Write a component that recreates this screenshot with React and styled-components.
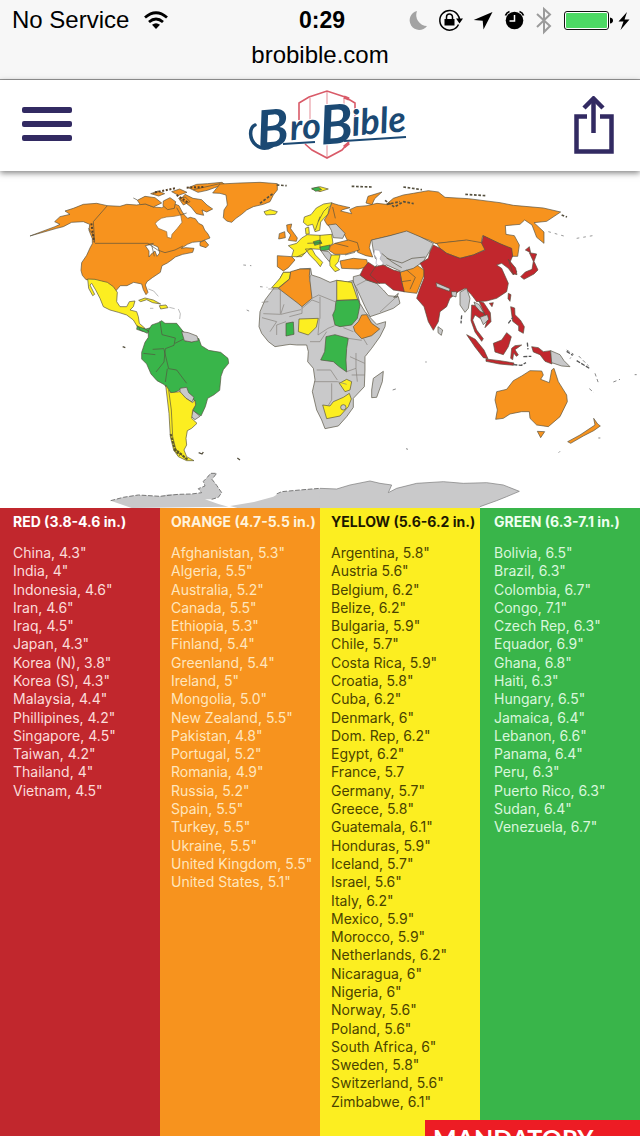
import React from "react";
import styled, { createGlobalStyle } from "styled-components";

const GlobalStyle = createGlobalStyle`
  * { box-sizing: border-box; }
  body { margin: 0; background: #fff; }
  h2, ul { margin: 0; padding: 0; }
  ul { list-style: none; }
`;

const RED = "#c1272d";
const ORANGE = "#f7931e";
const YELLOW = "#fcee21";
const GREEN = "#39b54a";
const GRAY = "#c9c9ca";
const NAVY = "#322a62";

const Page = styled.div`
  min-height: 100vh;
  display: flex;
  flex-direction: column;
  font-family: "Liberation Sans", Arial, sans-serif;
`;

const BrowserBar = styled.div`
  height: 80px;
  background: #f7f7f7;
  border-bottom: 1px solid #9a9a9a;
  color: #000;
  font-size: 24px;
`;

const StatusRow = styled.div`
  display: grid;
  grid-template-columns: 1fr auto 1fr;
  align-items: center;
  height: 40px;
  padding: 0 8px 0 12px;
`;

const Carrier = styled.div`
  display: flex;
  align-items: center;
  gap: 14px;
`;

const Clock = styled.time`
  font-weight: 700;
  font-size: 23px;
`;

const StatusIcons = styled.div`
  display: flex;
  align-items: center;
  justify-content: flex-end;
`;

const Address = styled.div`
  text-align: center;
  line-height: 30px;
`;

const SiteHeader = styled.header`
  position: relative;
  z-index: 1;
  display: grid;
  grid-template-columns: 1fr auto 1fr;
  align-items: center;
  height: 91px;
  padding: 0 22px;
  background: #fff;
  box-shadow: 0 2px 6px rgba(0, 0, 0, 0.5);
`;

const IconButton = styled.button`
  display: flex;
  justify-self: ${(p) => p.$side};
  padding: 0;
  border: 0;
  background: none;
  color: ${NAVY};
`;

const LogoLink = styled.a`
  display: block;
  line-height: 0;
`;

const WorldMap = styled.svg`
  display: block;
  width: 100%;
  height: auto;
`;

const Chart = styled.main`
  position: relative;
  flex: 1;
  display: grid;
  grid-template-columns: repeat(4, 1fr);
  overflow: hidden;
  font-family: Inter, "Open Sans", sans-serif;
`;

const Column = styled.section`
  background: ${(p) => p.$bg};
  color: ${(p) => p.$fg};
  padding: 5px 0 24px ${(p) => p.$inset};
  white-space: nowrap;
`;

const ColumnTitle = styled.h2`
  font-size: 14px;
  font-weight: 700;
  line-height: 18px;
`;

const Countries = styled.ul`
  display: grid;
  grid-template-rows: repeat(31, 1fr);
  min-height: 567px;
  margin-top: 13px;
  color: ${(p) => p.$tone};
  font-size: 14px;
  line-height: 18px;
`;

const Banner = styled.aside`
  position: absolute;
  right: 0;
  bottom: 0;
  width: 215px;
  height: 16px;
  padding: 4px 8px 0;
  overflow: hidden;
  background: #ed1c24;
  color: #fff;
  font-family: Lato, sans-serif;
  font-size: 25px;
  font-weight: 700;
  line-height: 28px;
`;

const data = [
  {
    title: "RED (3.8-4.6 in.)", bg: RED, fg: "#fff", tone: "#fbdcda", inset: "13px",
    rows: ['China, 4.3"', 'India, 4"', 'Indonesia, 4.6"', 'Iran, 4.6"', 'Iraq, 4.5"', 'Japan, 4.3"', 'Korea (N), 3.8"', 'Korea (S), 4.3"', 'Malaysia, 4.4"', 'Phillipines, 4.2"', 'Singapore, 4.5"', 'Taiwan, 4.2"', 'Thailand, 4"', 'Vietnam, 4.5"'],
  },
  {
    title: "ORANGE (4.7-5.5 in.)", bg: ORANGE, fg: "#fff3dc", tone: "#ffe6bd", inset: "11px",
    rows: ['Afghanistan, 5.3"', 'Algeria, 5.5"', 'Australia, 5.2"', 'Canada, 5.5"', 'Ethiopia, 5.3"', 'Finland, 5.4"', 'Greenland, 5.4"', 'Ireland, 5"', 'Mongolia, 5.0"', 'New Zealand, 5.5"', 'Pakistan, 4.8"', 'Portugal, 5.2"', 'Romania, 4.9"', 'Russia, 5.2"', 'Spain, 5.5"', 'Turkey, 5.5"', 'Ukraine, 5.5"', 'United Kingdom, 5.5"', 'United States, 5.1"'],
  },
  {
    title: "YELLOW (5.6-6.2 in.)", bg: YELLOW, fg: "#1c1800", tone: "#4a4300", inset: "11px",
    rows: ['Argentina, 5.8"', 'Austria 5.6"', 'Belgium, 6.2"', 'Belize, 6.2"', 'Bulgaria, 5.9"', 'Chile, 5.7"', 'Costa Rica, 5.9"', 'Croatia, 5.8"', 'Cuba, 6.2"', 'Denmark, 6"', 'Dom. Rep, 6.2"', 'Egypt, 6.2"', 'France, 5.7', 'Germany, 5.7"', 'Greece, 5.8"', 'Guatemala, 6.1"', 'Honduras, 5.9"', 'Iceland, 5.7"', 'Israel, 5.6"', 'Italy, 6.2"', 'Mexico, 5.9"', 'Morocco, 5.9"', 'Netherlands, 6.2"', 'Nicaragua, 6"', 'Nigeria, 6"', 'Norway, 5.6"', 'Poland, 5.6"', 'South Africa, 6"', 'Sweden, 5.8"', 'Switzerland, 5.6"', 'Zimbabwe, 6.1"'],
  },
  {
    title: "GREEN (6.3-7.1 in.)", bg: GREEN, fg: "#effff0", tone: "#d9f7dc", inset: "14px",
    rows: ['Bolivia, 6.5"', 'Brazil, 6.3"', 'Colombia, 6.7"', 'Congo, 7.1"', 'Czech Rep, 6.3"', 'Equador, 6.9"', 'Ghana, 6.8"', 'Haiti, 6.3"', 'Hungary, 6.5"', 'Jamaica, 6.4"', 'Lebanon, 6.6"', 'Panama, 6.4"', 'Peru, 6.3"', 'Puerto Rico, 6.3"', 'Sudan, 6.4"', 'Venezuela, 6.7"'],
  },
];

/* Each region is drawn on a grid three times finer than the map's own units. */
const Region = ({ x, y, children }) => (
  <g transform={`translate(${x} ${y}) scale(0.33333)`} stroke="#55503f" strokeWidth="2" strokeLinejoin="round">
    {children}
  </g>
);

const Americas = () => (
  <>
    <Region x={20} y={175}>
      <g fill={ORANGE}>
        <path d="M104 140l16-15 30-7-15-10 25-8 30-12 40-3 32 7 38 2 20-6 30 2 25-4 25 10 25 2 15-8 15 10 12-12 10 4 8 16 8 12 10 10 8-3 15 4 10 14 12 6 6 14 10 12 6 12-10 4-15 6-28 3-15 6-18 12 14-2 24 2-4 12-30 6-22 8-10 8-14 10-16 8-5 20-24 16-16 12-5 10 8 22-6 7-8-15-5-17-24-5-20 10-20 0-12 14-4 8-10-18-18-12-17-5-20-5-22 0-11-13-4-15 2-23 15-22 10-22 7-13 0-15-10-25 2-18-19-8-35 2-25 13-20 5-80 23 75-28 15-7z" />
        <path d="M352 76l23-12 30 4 20 16-25 12-24-9-15 2zM392 56l22-8 20 8-18 7zM430 78l20-10 17 12-4 20-20 4-14-12zM455 50l24-8 22 10-26 9zM476 70l20-4 14 14-20 10zM495 58l24 12 26 4 16 16 17 12-18 9-14-6 5 16-22-5-16-20-18-14-14-8zM505 38l25-10 32-2 44-4 8 6-30 10-22 8-28 6z" />
        <path d="M540 202l14-6 12 14-8 8-18-6z" />
      </g>
      <path fill="#fff" stroke="#8a6a40" d="M410 140l14-10 16-4 22-2 20-4 4 22-14 18-16 18-2 12-12-3-2-17-25-10-9-14z" />
      <path fill="#fff" d="M376 212l20-4 18 8 5 18-8 10-6-16-12 10-6 8 0-18z" />
      <path fill="none" d="M225 205h158l30 20 22 8 30-8 24-12M262 92l-42 48 4 60M470 98l12 22 18-6M395 210l8 34M383 208l18-3M415 50l-16 6M600 26l-80 18M352 75l-12-6M205 160l14 18 4 26" />
      <path fill="none" strokeWidth="6" stroke="#554027" strokeDasharray="6 5" d="M214 145l8 55M405 52l60-12M470 60l36 24M500 38l50-2" />
      <path fill={YELLOW} d="M203 312l22 1 20 5 17 4 18 13 12 17-2 28 10 15 20 0 8-15 17-2-5 17-10 10 20 5 5 15 3 20 17 15-10 6-13-11-12-20-20-15-25-8-25-7-20-10-10-25-13-25-12-20-5 5 14 28-6 4-12-22z" />
      <path fill={YELLOW} d="M356 376l19-7 25 6 22 12-24-4-18-9-18 6zM418 392l20-2 6 8-22 4z" />
      <path fill={GREEN} d="M352 452l10 8 16 2 18-5-6 10-22 2-18-6z" />
      <path fill="none" stroke="#999" d="M385 342l16 6 14 16M448 397l16 4M475 402l6 14-2 16M390 400h10" />
    </Region>
    <Region x={80} y={310}>
      <path fill={GREEN} d="M205 62l10-17 20-7 10-6 10 8 35 0 12 15 12 15 0 22 22 4 20-11 8 22 22 14 36 6 22 18 2 15-16 19-7 20-4 42-18 14-18 10-7 25-13 28-24-16 8-22-14-24-30-18-28 14-22-28-22-12-18-20-13-30-15-15 0-20 10-30 10-15zM176 50l18 6 12 8-4 6-22-10z" />
      <g fill={GRAY}>
        <path d="M305 65l20 3 26 10 4 14-20 4-22-4z" />
        <path d="M300 235l20-3 6 16 16 14-6 14-18-11-18-15zM340 302l20 17-15 10-12-10z" />
      </g>
      <path fill={YELLOW} d="M272 248l28-3 18 20 20 13 7-8 2 15-9 15-3 25 16 15-16 15-13 7-4 23 2 20-8 15 8 20 22 12-22 0-25-12-14-20-10-40-4-70-10-85 10 15z" />
      <path fill="none" d="M266 240l8 60 4 80 10 40 30 28M240 34l6 40 40 10-4 22-26 10-4 40-24 30M190 130l36 4M252 118l14 58 24 4 30 40M218 118l34-2M262 176l-6 40M285 100l24-12" />
      <path fill="none" strokeWidth="6" stroke="#5b5726" d="M272 372l12 44 40 34M282 418l18 18" strokeDasharray="8 3" />
      <path d="M356 428l10 4 4-6M392 506l10-12M128 110l8 3M472 444l8 6" strokeWidth="4" fill="none" />
      <path fill={GRAY} stroke="none" d="M92 572l38-10 45-7 65 4 25-6 30 0 40-1 30-4-10-12 20-8-5-14 12-12 10-12 18 0-14 18 14 18 15 22-10 14-20 6-20 0 40 14 30 8-290 4zM450 588l72-12 58-16 25-15 55-5 62-5v61H480z" />
      <path fill="none" strokeWidth="3" stroke="#777" strokeDasharray="14 5" d="M92 572l38-10 45-7 65 4 55-6 40-1 30-4-10-12 20-8-5-14 12-12 10-12 18 0-14 18 14 18 15 22-10 14-20 6M590 552l15-7 55-5 60-5" />
    </Region>
  </>
);

const AfricaAndEurasia = () => (
  <Region x={220} y={175}>
    <g fill={ORANGE}>
      <path d="M-22 54L0 27l60-3 60-2 52 4 0 19-12 15-10 20-20 8-30 7-20 10-15 13-17 12-13 12-15-4-10-10 2-23 10-15-4-30-18-5z" />
      <path d="M335 84l20 6 35 8-22 6-6 4 33 8-6-12 20-9 32-3 30-7 28 3 21-18 30-10 30-5 45-8 30 4 20 16 70 4 95 12 40 8 90 8 52 12-42 28-38 4 30 28 0 34-22-18-14-37-22-15-14 13-44 4 2 26 25 4 15 28-5 34-17 0-3-22-35-16-50-24-5 24-45-10-90 10-20-10-30-10-40-15-50 12-55 13-5 22 10 28-20-4-25-10-2-22-28-12-10-20-30-15-22-14-8-14 12-20z" />
      <path d="M438 84l6-20 42-13-22 20-8 18zM330 213l15-8 40-10 27 8 6 22-23 7-20 6-30 0-17-11zM360 258l40-8 40 4 5 21-30 7-50-2z" />
      <path d="M540 292l20-7 30-15 22 15 0 15-12 30-10 25-40-5-5-30zM650 205l90-10 45 8 12 20-37 17-40 10-40-15-20-15z" />
      <path d="M200 150l15-3-3 14 20 28-3 10-24-3 7-16-10-12zM178 176l16-6 2 18-20 4zM172 242l43 3 10 10-20 23-15 10-18-13z" />
    </g>
    <g fill={YELLOW}>
      <path d="M250 142l3-16 20-7 16-20 22-12 25-4-8 14-4 20-22 24-3 25-14 4-7-22-16 4zM256 160l10-4 2 20-10 2z" />
      <path d="M205 212l25-7 15-16 17-10 38 2 35-3 4 27-14 10-25 8-30-2-15 13-10 11-30 0 6-20zM256 222l20 0 10 18 22 22-7 13-12-15-20-20zM328 240l32 0-5 20-10 12 14 12-14 6-15-18zM132 110l18-6 22 6-6 8-28 2z" />
      <path d="M275 42l25-7 25 7-25 8z" />
    </g>
    <path fill={GREEN} d="M280 200l20-5 6 10-22 6zM300 216l30-6-4 15-24 2zM275 40l20-4 10 8-18 5z" />
    <g fill={GRAY}>
      <path d="M325 150l23-3 27 28-7 15-28-2-6-22zM302 226l24 4 8 10-6 20-12-14z" />
      <path d="M455 195l55-13 50-14 40 17 40 20-12 25-18 30-30 20-35 10-45-20-10 5-24-25-6-22z" />
      <path d="M400 305l20-5 20 15 30 10 20 20 15 17 30 3 5 20-20 15-40 15-30 10-15-30-25-55-10-15zM535 355l-4 12-10 0z" />
      <path d="M165 335l15-25 10-18 25 0 25-10 32-2 3 20 25 8 30 14 20-6 40 6 10-2 8 20 12 45 15 25 13 15 22 23 27-8-2 15-15 30-25 35-20 25 0 40-2 50-33 35 0 27-20 28-25 28-40 8-10-26-15-30-13-55 8-35-5-35-17-20 2-30-5-20-30 0-20-2-45 7-20-15-20-25-8-20 3-45 15-35z" />
      <path d="M455 645l5-35 30-21-3 31-17 47-15 1z" />
    </g>
    <path fill="#fff" stroke="#aab" d="M464 224l14 2 6 14-4 12 10 12-8 12-14-10 2-16-8-12z" />
    <g fill={YELLOW}>
      <path d="M155 338l25-28 10-18 22 0-4 20-32 26zM350 316l45 6 8 22 10 30-63 2zM237 432l58-2-6 26-24 24-30-10z" />
      <path d="M358 625l22-12 15 7-5 25-15 5zM308 690l22 3 10-13 30-13 18-12 6 17-9 23-25 28-40 8z" />
    </g>
    <path fill={ORANGE} d="M175 340l34-28 3-22 28-8 30 0-2 20 8 68-30 25-12-10zM425 420l15-1 15 26 24 17-24 20-30 9-20-21-5-15 15-15z" />
    <path fill={GREEN} d="M348 377l67-3 5 16-8 40-17 20-35 5-15-5-7-30 7-15zM198 445l22-4 2 37-24 5zM318 485l27-6 40 11-5 30-2 35 2 36-24-17-16-14-38-5 12-25z" />
    <circle cx="370" cy="697" r="8" fill={GRAY} />
    <path fill="none" stroke="#85817a" d="M145 342h36v74M125 382l20-2M130 416l52 2 10-30M183 418l24-6 36-8M246 395v20l-38 10M246 400l30-25 22 8M276 370l20-10 54 22M300 365l0 66M272 300l-4 20M350 320v55M298 430l-4 50 30-20 20-8M170 480v-30l28-10M150 470l20-30-44-12M270 500h30l20-30M290 585h42l20 30M282 620h70l28 8M335 625v50l-10 16M380 590l28-10 0-46M390 545l44 20M395 600h40M385 490l40 6M400 470l-30-12M408 580l4 40M430 490l12 20M530 365l-50 46M440 315l-30 16" />
    <path fill={RED} d="M420 300l10-20 15-18 20 13 25-5 30 15 20 5 5 30 8 30-33-5-25-20-25 0-30-10zM640 210l20 10 20 15 40 15 40-10 35-15-10-20 5-23 50 24 35 14 3 23-8 19 20 28-10 10-15-20-20-15-15 5 15 10 20 45-5 25-30 20-30 8-30 2-15-20-20-20-20 10-25 20-10 25-20 15-5 30-15 26-15-26-13-45-22-25 10-30 12-30 0-25-12-20 25-15 5-20z" />
    <path fill={GRAY} d="M648 323l42 18-2 8-38-14zM694 350l16 0-2 16-12-4zM720 352l20-12 10 30-5 30-10 12-15-22zM654 455l14 10-4 16-10-8z" />
    <path fill="none" d="M300 125l-14 40M338 96l8 34M300 180v40M262 205l40-2M345 205l40 10M375 240l30-8M470 270l-20 30 30 26M560 285l26 22-16 36M545 320l28-4M325 95l-14 14-16 30M230 246l26-12M500 250l46 14 30-14 40-4M485 235l30 25 30 18M385 320l14-4" />
    <path fill="none" strokeWidth="5" strokeDasharray="8 5" d="M495 76l28 20 28-16 30 6M120 85l40-30M170 30l30 2M395 34l60 2M550 36l56 8M736 58l60 4M500 88l40-8M1025 120l16 6" />
    <path fill="none" stroke="#999" d="M985 170l50 14M1070 190l48-8M70 270l24 2M120 335l22 2M80 405l14 6" strokeDasharray="8 12" strokeWidth="3" />
  </Region>
);

const SoutheastAsia = () => (
  <Region x={400} y={240}>
    <g fill={RED}>
      <path d="M215 195l25 4 15 26-15 10-15-10-7 15 12 30 20 26-5 8-20-28-12-34zM237 184l14 4 20 30 2 27-18 18 6-22-12-30z" />
      <path d="M200 284l26 14 26 32 12 26-14-3-25-32zM258 357l42 5 42 7-2 7-42-4-40-8zM280 310l25-10 15-22 14 12-9 30-15 24-25-8z" />
      <path d="M335 325l10-8 20-2-20 14 10 16-6 4-8-10-3 20-6-4zM332 200l12 4 1 20 16 16 12 20-3 20-14-8 0-14-18-14zM395 320l20 3 15 12 22-3 4 40-21-8-15-20-20-8z" />
      <path d="M388 38l22 4-8 22 12 26-12 12-30 16-10-8 14-14 20-8 4-24zM325 58l22 26 4 20-12-3-6-20zM325 160l8 4-3 20-6-8zM268 190l12-2-4 12zM376 30l12-10 4 18z" />
    </g>
    <path fill={GRAY} d="M240 232l22-8 4 14-16 16zM222 186l16 8 14 26-12-6-14-16zM452 332l28 12 12 18 18 18-25-2-30-10z" />
    <path fill="none" stroke="#555" strokeWidth="4" d="M340 374l24 2 14-8M370 350l24-1M382 308l2 20M325 250l14-18M185 226l-2 24M500 334l18 12M530 362l40 24" strokeDasharray="12 4" />
  </Region>
);

const Oceania = () => (
  <Region x={300} y={310}>
    <g fill={ORANGE}>
      <path d="M587 328l5-28-7-30 5-25 30-7 20-26 25-14 25-16 35 1 5 12-8 13 26 10 7-38 7-5 13 40 25 40 2 20-22 45-35 30-35-5-20-20-2-20-23 0-35 7-20 13zM712 364l22 1-12 18z" />
      <path d="M803 395l37-20 30-20 15-10-4-20 12 17 8 6-20 14-31 16-38 22z" />
    </g>
    <path fill={GRAY} stroke="none" d="M60 535l50 2 40-12 60-12 30 7 35 5-10 23 25-13 60-15 80-5 60 5 70-2 50 7 48 19-38 16-30 12-50 18v10H58z" />
    <path fill="none" stroke="#777" d="M60 535l50 2 40-12 60-12 30 7 35 5-10 23 25-13 60-15 80-5 60 5 70-2 50 7 48 19-38 16-30 12-50 18" />
    <path fill="none" stroke="#888" strokeWidth="3" strokeDasharray="10 8" d="M800 120l20 12-10 14M836 138l30 30M885 190l12 34M868 236l14 12M940 216l20-8M1004 194h6M278 240l12-4M318 416l6 2M376 156h4M776 428l4-4M895 384h6" />
  </Region>
);

const Logo = () => (
  <svg width="176" height="78" viewBox="-16 0 176 78" role="img" aria-label="BroBible">
    <g fill="none" stroke="#d95a68" strokeWidth="1.6">
      <path d="M51 33V16l10-6 18-6 18 6 10 6v16M57 57l7 6 15 8 15-8 7-8" />
      <path strokeWidth="0.7" d="M62 11v22M79 4v67M96 11v14" />
      <path strokeWidth="3" d="M96 60l5-4M96 10l5 2" />
    </g>
    <g transform="rotate(-5 80 44)" fontFamily="Lato, sans-serif" fontWeight="700" fontStyle="italic" fill="#1b4973" stroke="#fff" strokeWidth="2" paintOrder="stroke">
      <text x="9" y="55" fontSize="52">B</text>
      <text x="42" y="50" fontSize="36">ro</text>
      <text x="72" y="57" fontSize="54">B</text>
      <text x="104" y="51" fontSize="36">ible</text>
    </g>
    <path d="M7 38C1 41 1 52 8 58c5 4 11 4 16 1" fill="none" stroke="#1b4973" strokeWidth="3.5" strokeLinecap="round" />
    <path d="M35 57l32-2M96 54l62-4" fill="none" stroke="#1b4973" strokeWidth="2.200" />
  </svg>
);

const StatusGlyphs = () => (
  <svg width="226" height="30" viewBox="406 5 226 30" aria-hidden="true">
    <path d="M417 11a9.600 9.600 0 1 0 10 15A11 11 0 0 1 417 11z" fill="#a3a3a3" />
    <path d="M457.500 14.500a9.800 9.800 0 1 0 1 10M457.500 14.500a9.800 9.800 0 0 1 2 5" fill="none" stroke="#000" strokeWidth="1.500" />
    <path d="M456 18.500h7l-3.500 5zM444.500 19h10v6.500h-10z" />
    <path d="M446.500 19v-2a3 3 0 0 1 6 0v2" fill="none" stroke="#000" strokeWidth="1.500" />
    <path d="M492.500 12l-9 17.500-.8-8.800-9-.8z" />
    <circle cx="514.500" cy="20.500" r="8.800" />
    <path d="M514.500 15v6h-5" fill="none" stroke="#fff" strokeWidth="1.500" />
    <path d="M505.500 15.500q1-3 4-4M519.500 11.500q3 1 4 4" fill="none" stroke="#000" strokeWidth="1.800" />
    <path d="M537 14l13 12-6 6V9l6 5.500L537 27" fill="none" stroke="#9b9b9b" strokeWidth="2" />
    <rect x="564.500" y="11.500" width="44" height="18" rx="2.500" fill="#fff" stroke="#111" />
    <rect x="566" y="13" width="41" height="15" rx="1" fill="#4cd964" />
    <path d="M610 17.500q3 .5 3 3t-3 3z" />
    <path d="M627 12l-8.500 9.500h5L620.500 30l9-10.500h-5z" />
  </svg>
);

export default function App() {
  return (
    <Page>
      <GlobalStyle />
      <BrowserBar>
        <StatusRow>
          <Carrier>
            No Service
            <svg width="26" height="20" viewBox="0 0 26 20" aria-hidden="true">
              <path d="M2 7.500q11-9.500 22 0M6 12q7-6 14 0" fill="none" stroke="#000" strokeWidth="2.800" />
              <path d="M9 14.800q4-3 8 0L13 19z" />
            </svg>
          </Carrier>
          <Clock>0:29</Clock>
          <StatusIcons><StatusGlyphs /></StatusIcons>
        </StatusRow>
        <Address>brobible.com</Address>
      </BrowserBar>
      <SiteHeader>
        <IconButton $side="start" aria-label="Menu">
          <svg width="50" height="38" viewBox="0 0 50 38" fill="currentColor">
            <rect width="50" height="6" rx="2" />
            <rect y="14" width="50" height="6" rx="2" />
            <rect y="28" width="50" height="6" rx="2" />
          </svg>
        </IconButton>
        <LogoLink href="#home"><Logo /></LogoLink>
        <IconButton $side="end" aria-label="Share">
          <svg width="48" height="60" viewBox="0 0 48 60" fill="none" stroke="currentColor" strokeWidth="4.500">
            <path d="M17 20.500H6.500v35h35v-35H30M23.500 37V4" />
            <path d="M14 12l9.500-9.500L33 12" />
          </svg>
        </IconButton>
      </SiteHeader>
      <WorldMap viewBox="0 171 640 337" role="img" aria-label="World map coloured by range">
        <Americas />
        <AfricaAndEurasia />
        <SoutheastAsia />
        <Oceania />
      </WorldMap>
      <Chart>
        {data.map((c) => (
          <Column key={c.title} $bg={c.bg} $fg={c.fg} $inset={c.inset}>
            <ColumnTitle>{c.title}</ColumnTitle>
            <Countries $tone={c.tone}>
              {c.rows.map((row) => <li key={row}>{row}</li>)}
            </Countries>
          </Column>
        ))}
        <Banner>MANDATORY</Banner>
      </Chart>
    </Page>
  );
}
